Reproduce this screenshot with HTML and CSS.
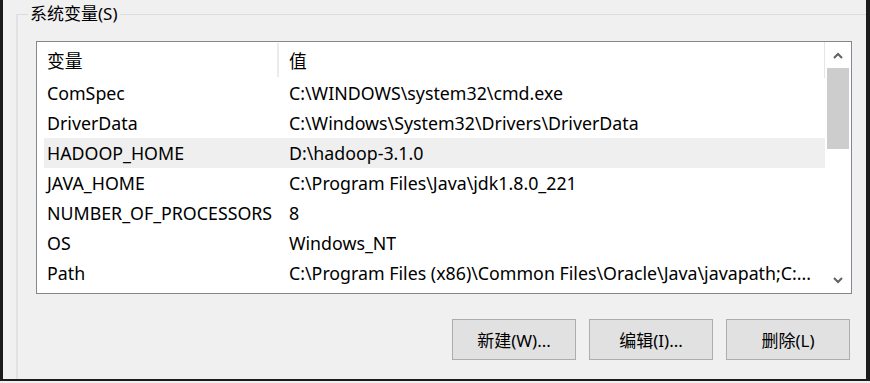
FILE: index.html
```html
<!doctype html>
<html>

<head>
    <title>系统变量</title>
    <link rel="stylesheet" href="styles.css">
</head>

<body>
    <div class="frame">
        <fieldset class="group">
            <legend>系统变量(S)</legend>
            <div class="list">
                <div class="list-body">
                    <div class="list-head">
                        <div class="col-name">变量</div>
                        <div class="col-value">值</div>
                    </div>
                    <div class="row">
                        <div class="col-name">ComSpec</div>
                        <div class="col-value">C:\WINDOWS\system32\cmd.exe</div>
                    </div>
                    <div class="row">
                        <div class="col-name">DriverData</div>
                        <div class="col-value">C:\Windows\System32\Drivers\DriverData</div>
                    </div>
                    <div class="row hover">
                        <div class="col-name">HADOOP_HOME</div>
                        <div class="col-value">D:\hadoop-3.1.0</div>
                    </div>
                    <div class="row">
                        <div class="col-name">JAVA_HOME</div>
                        <div class="col-value">C:\Program Files\Java\jdk1.8.0_221</div>
                    </div>
                    <div class="row">
                        <div class="col-name">NUMBER_OF_PROCESSORS</div>
                        <div class="col-value">8</div>
                    </div>
                    <div class="row">
                        <div class="col-name">OS</div>
                        <div class="col-value">Windows_NT</div>
                    </div>
                    <div class="row">
                        <div class="col-name">Path</div>
                        <div class="col-value">C:\Program Files (x86)\Common Files\Oracle\Java\javapath;C:...</div>
                    </div>
                </div>
                <div class="scrollbar">
                    <div class="arrow">
                        <svg width="10" height="7" viewBox="0 0 10 7"><path d="M1 6 L5 2 L9 6" fill="none" stroke="#606060" stroke-width="2"/></svg>
                    </div>
                    <div class="track">
                        <div class="thumb"></div>
                    </div>
                    <div class="arrow">
                        <svg width="10" height="7" viewBox="0 0 10 7"><path d="M1 1 L5 5 L9 1" fill="none" stroke="#606060" stroke-width="2"/></svg>
                    </div>
                </div>
            </div>
            <div class="buttons">
                <a class="btn">新建(W)...</a>
                <a class="btn">编辑(I)...</a>
                <a class="btn">删除(L)</a>
            </div>
        </fieldset>
    </div>
</body>

</html>
```

FILE: styles.css
```css
body,
html {
    width: 100%;
    height: 100%;
    padding: 0;
    margin: 0;
    background: #f0f0f0;
    overflow: hidden;
}

* {
    font-family: "Noto Sans", "Noto Sans CJK SC", sans-serif;
    box-sizing: border-box;
}

.frame {
    width: 870px;
    height: 381px;
    border-left: 3px solid #1c1c1c;
    border-right: 4px solid #1c1c1c;
    border-bottom: 2px solid #1c1c1c;
    overflow: hidden;
    padding: 3px 0 0 13px;
}

.group {
    margin: 0;
    padding: 0 0 0 18px;
    border: none;
    border-top: 1px solid #dcdcdc;
    border-left: 2px solid #e2e2e2;
    height: 400px;
    min-width: 0;
}

.group legend {
    margin-left: -8px;
    padding: 0 2px;
    font-size: 17px;
    line-height: 22px;
    color: #000;
}

.list {
    margin-top: 16px;
    width: 816px;
    height: 253px;
    border: 1px solid #828790;
    background: #fff;
    display: flex;
}

.list-body {
    flex: 1;
    overflow: hidden;
}

.list-head {
    display: flex;
    height: 36px;
    align-items: center;
    border-right: 1px solid #e5e5e5;
    font-size: 17.8px;
}

.list-head .col-name {
    border-right: 2px solid #ebebeb;
    height: 34px;
    display: flex;
    align-items: center;
}

.row {
    display: flex;
    height: 30px;
    align-items: center;
    font-size: 17.8px;
    margin-left: 7px;
    white-space: nowrap;
}

.col-name {
    flex-shrink: 0;
}

.row .col-name {
    width: 235px;
    padding-left: 3px;
}

.list-head .col-name {
    width: 242px;
    padding-left: 10px;
}

.col-value {
    padding-left: 10px;
    white-space: nowrap;
    overflow: hidden;
}

.hover {
    background: #efefef;
}

.scrollbar {
    width: 26px;
    display: flex;
    flex-direction: column;
}

.arrow {
    height: 26px;
    display: flex;
    justify-content: center;
    align-items: center;
}

.track {
    flex: 1;
    padding: 0 2px;
}

.thumb {
    height: 81px;
    background: #cdcdcd;
}

.buttons {
    width: 816px;
    display: flex;
    justify-content: flex-end;
    gap: 13px;
    margin-top: 25px;
    padding-right: 2px;
}

.btn {
    width: 124px;
    height: 41px;
    border: 1px solid #adadad;
    background: #e1e1e1;
    display: flex;
    justify-content: center;
    align-items: center;
    font-size: 17px;
    color: #000;
    cursor: pointer;
}
```
